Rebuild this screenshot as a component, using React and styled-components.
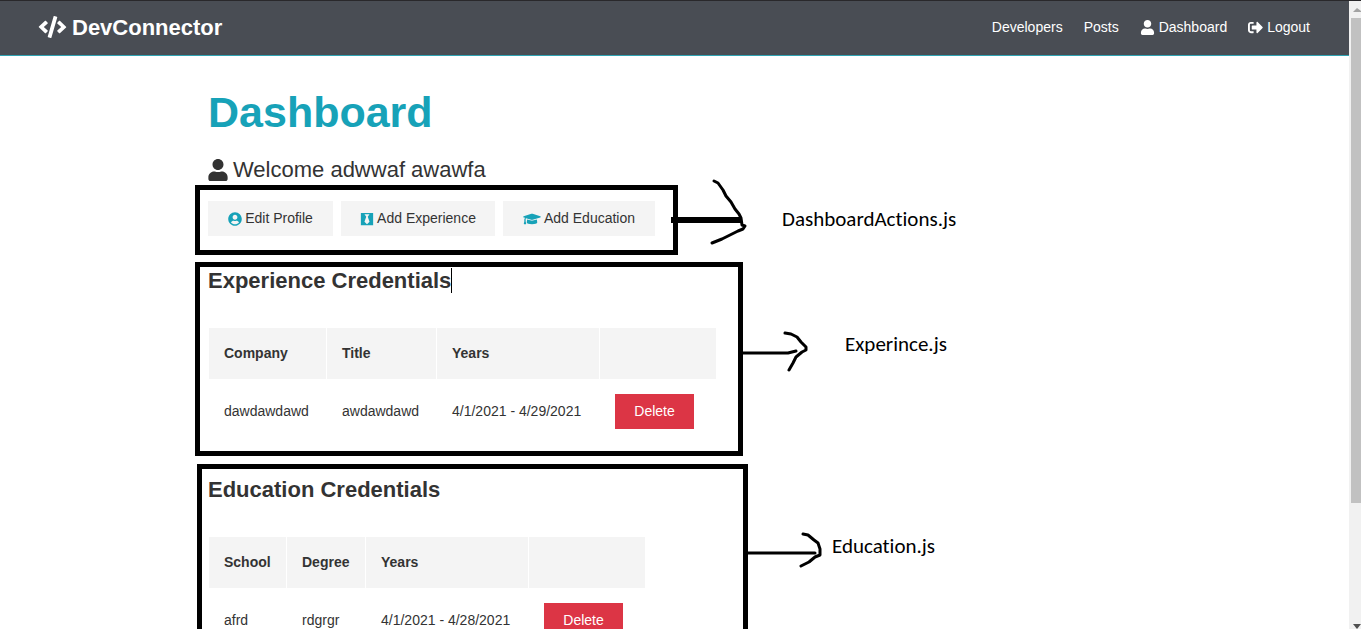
import React from "react";
import styled, { createGlobalStyle } from "styled-components";
import {
  FaBlackTie,
  FaCode,
  FaGraduationCap,
  FaSignOutAlt,
  FaUser,
  FaUserCircle,
} from "react-icons/fa";

const GlobalStyle = createGlobalStyle`
  * { box-sizing: border-box; }
  body {
    margin: 0;
    overflow: hidden;
    background: #fff;
    color: #333;
    font-family: "Liberation Sans", Arial, sans-serif;
    font-size: 14px;
    line-height: 23px;
  }
  h1, h2, p, ul { margin: 0; padding: 0; }
`;

const Shell = styled.div`
  display: flex;
  height: 100vh;
`;

const Page = styled.div`
  flex: 1;
  min-width: 0;
  overflow: hidden;
`;

const Navbar = styled.nav`
  display: flex;
  align-items: center;
  justify-content: space-between;
  height: 56px;
  padding: 0 39px 2px 38px;
  background: #494d54;
  border-top: 1px solid #29282b;
  border-bottom: 1px solid #2fa3b3;
`;

const Brand = styled.a`
  display: flex;
  align-items: center;
  gap: 5px;
  color: #fff;
  font-size: 22px;
  font-weight: bold;
  text-decoration: none;

  svg { width: 29px; height: 22px; }
`;

const NavList = styled.ul`
  display: flex;
  gap: 21px;
  list-style: none;
`;

const NavLink = styled.a`
  display: flex;
  align-items: center;
  gap: 4px;
  color: #fff;
  text-decoration: none;

  svg { width: 15px; height: 15px; }
`;

const Container = styled.main`
  position: relative;
  max-width: 991px;
  margin: 0 auto;
  padding: 29px;
`;

const Title = styled.h1`
  color: #17a2b8;
  font-size: 43px;
  line-height: 54px;
  margin-bottom: 13px;
`;

const Lead = styled.p`
  display: flex;
  align-items: center;
  gap: 5px;
  font-size: 22px;
  line-height: 35px;
  margin-bottom: 14px;

  svg { width: 20px; height: 22px; }
`;

const Actions = styled.div`
  display: flex;
  gap: 8px;
`;

const ActionLink = styled.a`
  display: flex;
  align-items: center;
  justify-content: center;
  gap: 3px;
  min-width: ${(p) => p.$width}px;
  height: 35px;
  background: #f4f4f4;
  color: #333;
  text-decoration: none;

  svg {
    width: ${(p) => p.$icon}px;
    height: 14px;
    color: #17a2b8;
  }
`;

const SectionTitle = styled.h2`
  display: flex;
  align-items: center;
  margin: 27px 0 29px;
  font-size: 22px;
  line-height: 35px;
`;

const Caret = styled.span`
  width: 1px;
  height: 25px;
  background: #000;
`;

const Table = styled.table`
  margin-bottom: 28px;
  border-collapse: separate;
  border-spacing: 1px;
  table-layout: fixed;
  width: ${(p) => p.$width}px;
`;

const HeadCell = styled.th`
  width: ${(p) => p.$width}px;
  padding: 14px 15px;
  background: #f4f4f4;
  text-align: left;
`;

const Cell = styled.td`
  padding: 14px 15px;
  white-space: nowrap;
`;

const DeleteButton = styled.button`
  display: block;
  width: 79px;
  height: 35px;
  padding: 0;
  border: 0;
  background: #dc3545;
  color: #fff;
  font: inherit;
`;

/* Hand-made notes drawn over the dashboard */
const Highlight = styled.div`
  position: absolute;
  left: ${(p) => p.$x}px;
  top: ${(p) => p.$y}px;
  width: ${(p) => p.$w}px;
  height: ${(p) => p.$h}px;
  border: 5px solid #000;
  pointer-events: none;
`;

const Arrow = styled.svg`
  position: absolute;
  left: ${(p) => p.$x}px;
  top: ${(p) => p.$y}px;
  fill: none;
  stroke: #000;
  stroke-width: 3;
  stroke-linecap: round;
  stroke-linejoin: round;
  pointer-events: none;
`;

const ThickShaft = styled.path`
  stroke-width: 6;
  stroke-linecap: butt;
`;

const Note = styled.span`
  position: absolute;
  left: ${(p) => p.$x}px;
  top: ${(p) => p.$y}px;
  color: #000;
  font-family: Carlito, Lato, sans-serif;
  font-size: 21px;
  line-height: 24px;
  font-variant-ligatures: none;
`;

const ScrollTrack = styled.div`
  display: flex;
  flex-direction: column;
  align-items: flex-end;
  width: 12px;
  background: #f1f1f1;
  border-top: 1px solid #29282b;

  svg { display: block; flex: none; }
`;

const ScrollThumb = styled.div`
  flex: 485;
  width: 10px;
  background: #c1c1c1;
`;

const ScrollRest = styled.div`
  flex: 109;
`;

function Credentials({ title, caret, columns, row, widths }) {
  const total = widths.reduce((sum, w) => sum + w + 1, 1);
  return (
    <section>
      <SectionTitle>
        {title}
        {caret && <Caret />}
      </SectionTitle>
      <Table $width={total}>
        <thead>
          <tr>
            {columns.map((name, i) => (
              <HeadCell key={i} $width={widths[i]}>{name}</HeadCell>
            ))}
          </tr>
        </thead>
        <tbody>
          <tr>
            {row.map((value) => (
              <Cell key={value}>{value}</Cell>
            ))}
            <Cell><DeleteButton type="button">Delete</DeleteButton></Cell>
          </tr>
        </tbody>
      </Table>
    </section>
  );
}

export default function App() {
  return (
    <>
      <GlobalStyle />
      <Shell>
        <Page>
          <Navbar>
            <Brand href="#"><FaCode />DevConnector</Brand>
            <NavList>
              <li><NavLink href="#">Developers</NavLink></li>
              <li><NavLink href="#">Posts</NavLink></li>
              <li><NavLink href="#"><FaUser />Dashboard</NavLink></li>
              <li><NavLink href="#"><FaSignOutAlt />Logout</NavLink></li>
            </NavList>
          </Navbar>
          <Container>
            <Title>Dashboard</Title>
            <Lead><FaUser />Welcome adwwaf awawfa</Lead>
            <Actions>
              <ActionLink href="#" $width={125} $icon={14}><FaUserCircle />Edit Profile</ActionLink>
              <ActionLink href="#" $width={154} $icon={14}><FaBlackTie />Add Experience</ActionLink>
              <ActionLink href="#" $width={152} $icon={18}><FaGraduationCap />Add Education</ActionLink>
            </Actions>
            <Credentials
              title="Experience Credentials"
              caret
              columns={["Company", "Title", "Years", ""]}
              row={["dawdawdawd", "awdawdawd", "4/1/2021 - 4/29/2021"]}
              widths={[117, 109, 162, 116]}
            />
            <Credentials
              title="Education Credentials"
              columns={["School", "Degree", "Years", ""]}
              row={["afrd", "rdgrgr", "4/1/2021 - 4/28/2021"]}
              widths={[77, 78, 162, 116]}
            />

            <Highlight $x={16} $y={129} $w={483} $h={70} />
            <Arrow $x={491} $y={119} width="80" height="72" viewBox="670 175 80 72">
              <ThickShaft d="M671 220H742" />
              <path d="M714 181L718 183L723 190L726 196L731 202L735 209L739 214L741 218L742 225L745 226L743 229L738 231L730 235L722 239L712 243" />
            </Arrow>
            <Note $x={603} $y={151}>DashboardActions.js</Note>

            <Highlight $x={16} $y={206} $w={548} $h={194} />
            <Arrow $x={561} $y={271} width="72" height="50" viewBox="740 327 72 50">
              <path d="M743 353H788L796 351M785 333L791 334L797 337L801 342L806 347L806 350L802 352L796 357L793 363L789 370" />
            </Arrow>
            <Note $x={666} $y={276}>Experince.js</Note>

            <Highlight $x={18} $y={408} $w={551} $h={200} />
            <Arrow $x={566} $y={472} width="84" height="50" viewBox="745 528 84 50">
              <path d="M748 553H815M803 534L808 535L814 540L818 543L820 549L820 555L815 557L809 562L801 566" />
            </Arrow>
            <Note $x={653} $y={478}>Education.js</Note>
          </Container>
        </Page>
        <ScrollTrack aria-hidden="true">
          <svg width="10" height="17" viewBox="0 0 10 17"><path d="M2 11H10V10L6 7Z" fill="#a3a3a3" /></svg>
          <ScrollThumb />
          <ScrollRest />
          <svg width="10" height="17" viewBox="0 0 10 17"><path d="M2 12H10L6 17Z" fill="#505050" /></svg>
        </ScrollTrack>
      </Shell>
    </>
  );
}
